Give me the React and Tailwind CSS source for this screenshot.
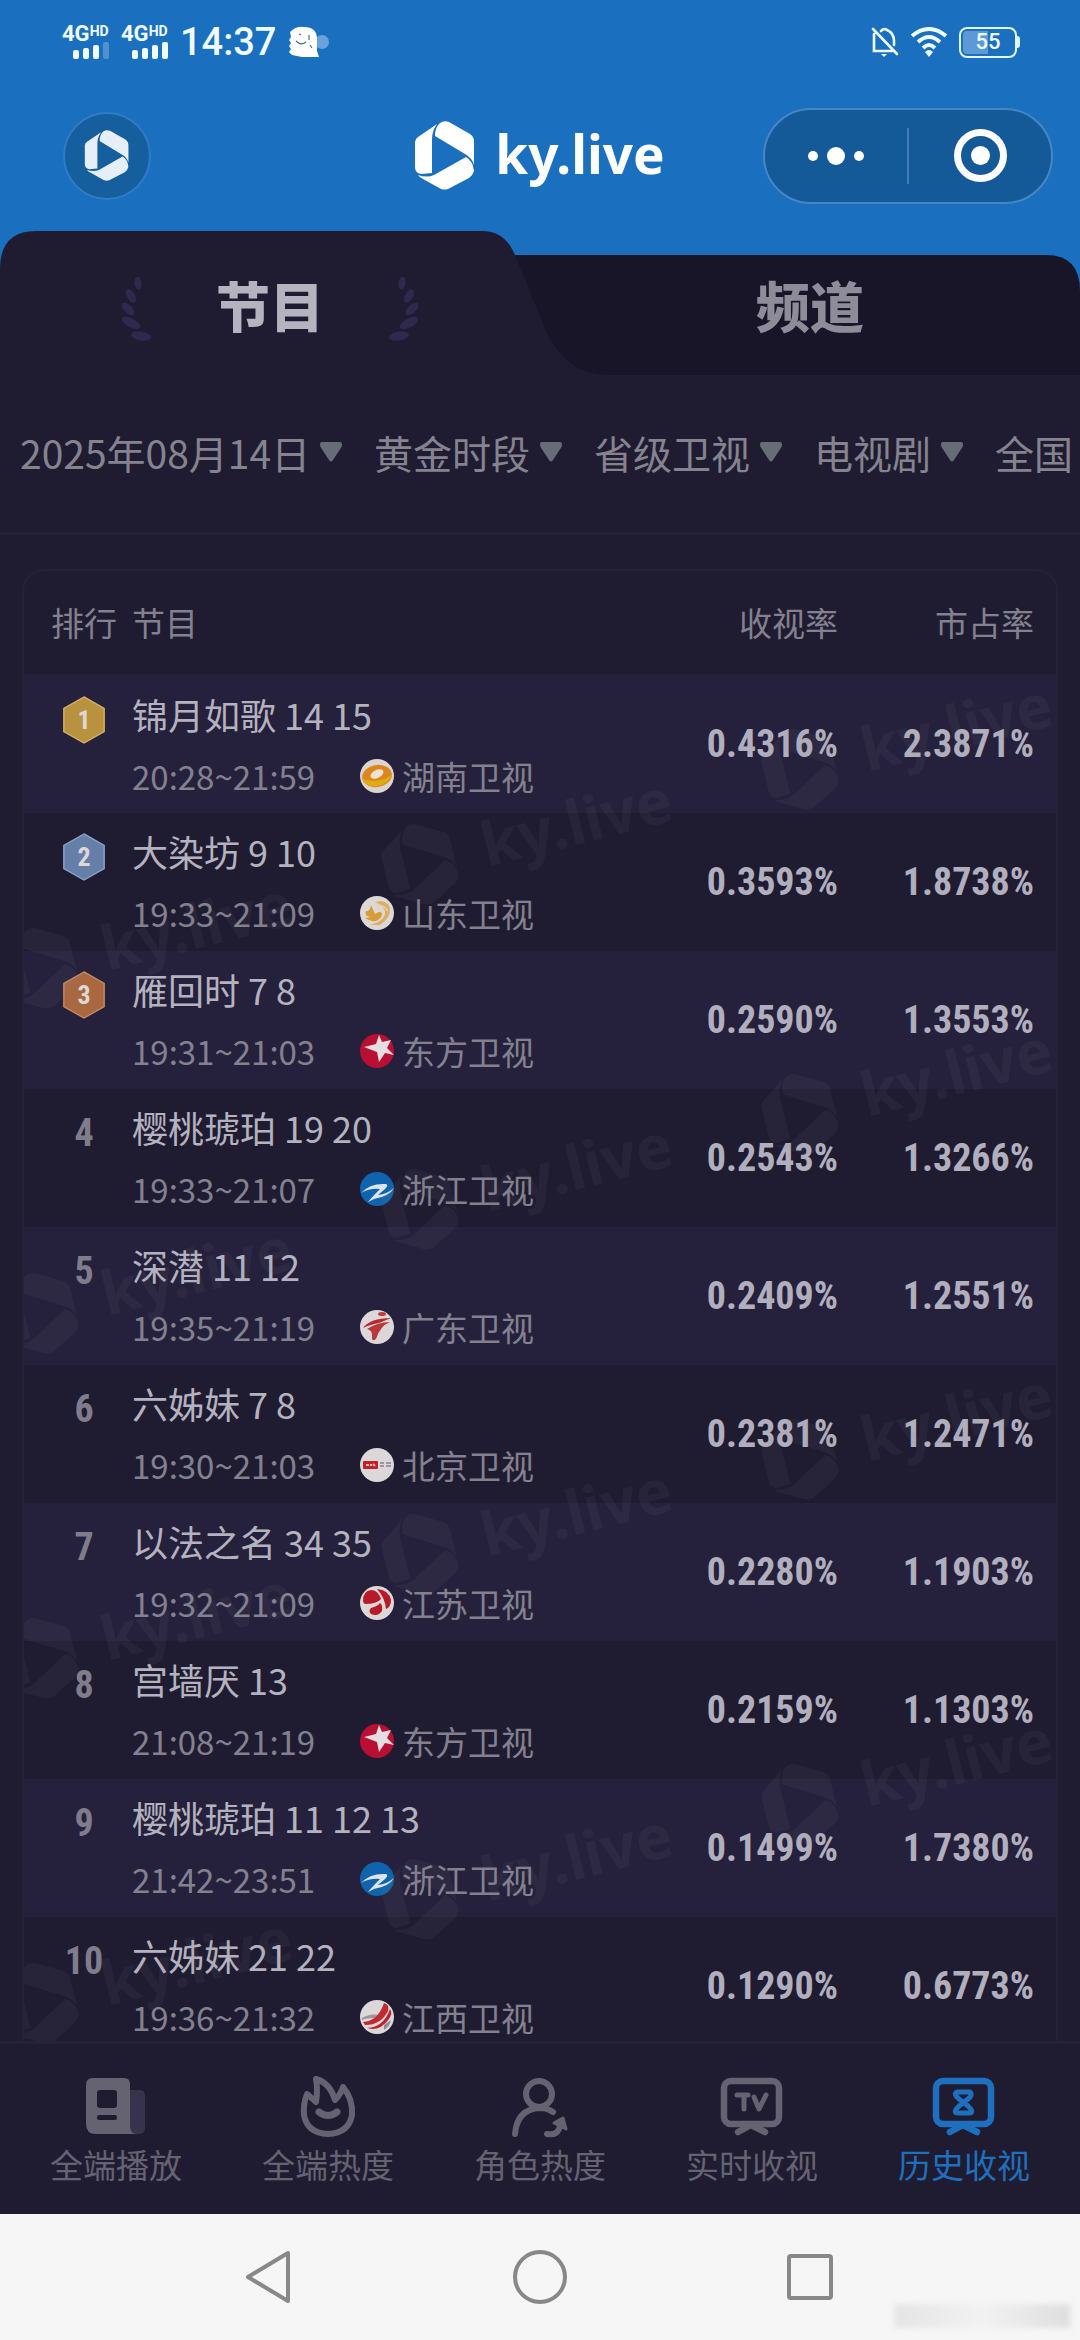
import React, { useState } from 'react';

const PROGRAMS = [
  { rank: 1, title: '锦月如歌 14 15', time: '20:28~21:59', channel: '湖南卫视', rating: '0.4316%', share: '2.3871%' },
  { rank: 2, title: '大染坊 9 10', time: '19:33~21:09', channel: '山东卫视', rating: '0.3593%', share: '1.8738%' },
  { rank: 3, title: '雁回时 7 8', time: '19:31~21:03', channel: '东方卫视', rating: '0.2590%', share: '1.3553%' },
  { rank: 4, title: '樱桃琥珀 19 20', time: '19:33~21:07', channel: '浙江卫视', rating: '0.2543%', share: '1.3266%' },
  { rank: 5, title: '深潜 11 12', time: '19:35~21:19', channel: '广东卫视', rating: '0.2409%', share: '1.2551%' },
  { rank: 6, title: '六姊妹 7 8', time: '19:30~21:03', channel: '北京卫视', rating: '0.2381%', share: '1.2471%' },
  { rank: 7, title: '以法之名 34 35', time: '19:32~21:09', channel: '江苏卫视', rating: '0.2280%', share: '1.1903%' },
  { rank: 8, title: '宫墙厌 13', time: '21:08~21:19', channel: '东方卫视', rating: '0.2159%', share: '1.1303%' },
  { rank: 9, title: '樱桃琥珀 11 12 13', time: '21:42~23:51', channel: '浙江卫视', rating: '0.1499%', share: '1.7380%' },
  { rank: 10, title: '六姊妹 21 22', time: '19:36~21:32', channel: '江西卫视', rating: '0.1290%', share: '0.6773%' },
];

const FILTERS = [
  { label: '日期', value: '2025年08月14日' },
  { label: '时段', value: '黄金时段' },
  { label: '频道类型', value: '省级卫视' },
  { label: '节目类型', value: '电视剧' },
  { label: '地区', value: '全国' },
];

const MEDALS = {
  1: { fill: '#b8923f', edge: '#d3b262' },
  2: { fill: '#667fa8', edge: '#8aa3c4' },
  3: { fill: '#a9683f', edge: '#c68a62' },
};

// x / y of each repeated logo inside the card
const WATERMARKS = [
  [776, 197], [396, 292], [16, 396],
  [776, 542], [396, 637], [16, 741],
  [776, 887], [396, 982], [16, 1086],
  [776, 1232], [396, 1327], [16, 1431],
];

const LogoShape = () => (
  <>
    <path d="M0 21Q0 18 3 16L22 3Q17 10 17 18V52L6 53Q0 52 0 46Z" />
    <path d="M25 2Q29-1 34 1L55 13Q59 16 59 20V44Q57 37 50 33L20 15Q20 6 25 2Z" />
    <path d="M3 54Q12 57 19 54L51 36Q58 40 59 50Q58 54 54 57L33 68Q30 69 26 68L8 58Q4 56 3 54Z" />
  </>
);

const Logo = ({ className }) => (
  <svg viewBox="0 0 60 69" className={className} fill="currentColor" aria-hidden="true">
    <LogoShape />
  </svg>
);

const Signal = ({ last }) => (
  <div className="w-[47px] flex flex-col">
    <div className="flex items-start h-4 leading-none font-bold">
      <span className="text-[22px] leading-4">4G</span>
      <span className="text-[14px] leading-[11px]">HD</span>
    </div>
    <svg viewBox="0 0 36 17" className="w-9 h-[17px] self-end" fill="currentColor" aria-hidden="true">
      <rect x="0" y="8" width="6" height="9" rx="2" />
      <rect x="10" y="6" width="6" height="11" rx="2" />
      <rect x="20" y="3" width="6" height="14" rx="2" />
      <rect x="30" y="0" width="6" height="17" rx="2" opacity={last ? 1 : 0.25} />
    </svg>
  </div>
);

const StatusBar = () => (
  <div className="h-[84px] flex items-center justify-between pl-[62px] pr-[60px] text-[#f0fbff] font-['Roboto',sans-serif]">
    <div className="flex items-center gap-3">
      <Signal />
      <Signal last />
      <span className="text-[38px] font-medium leading-none">14:37</span>
      <svg viewBox="0 0 42 32" className="w-[42px] h-8" aria-hidden="true">
        <circle cx="34" cy="16" r="7" fill="#6aa3dc" />
        <path d="M2 6Q8 0 16 1Q29 1 29 13V25L31 31H14L4 29L1 26L3 23L1 20L3 17L1 14L3 11Z" fill="#fff" />
        <path d="M8 15Q13 20 18 16M21 9V14M22 19L24 22M11 8L13 9" stroke="#4f6f90" strokeWidth="1.2" fill="none" />
      </svg>
    </div>
    <div className="flex items-center gap-3">
      <svg viewBox="0 0 28 32" className="w-7 h-8" fill="none" stroke="currentColor" strokeWidth="2.6" aria-hidden="true">
        <path d="M3 8V25H21M10 5Q13 2 16 4Q23 7 23 15V19M2 3L26 28" strokeLinecap="round" />
        <path d="M10 28H16L13 31Z" fill="currentColor" stroke="none" />
      </svg>
      <svg viewBox="0 0 36 30" className="w-9 h-[30px]" fill="none" stroke="currentColor" strokeWidth="4" aria-hidden="true">
        <path d="M1 9Q18-5 35 9M7 15Q18 5 29 15M12 21Q18 15 24 21" />
        <path d="M14 25Q18 21 22 25L18 30Z" fill="currentColor" stroke="none" />
      </svg>
      <div className="flex items-center">
        <div className="relative w-[58px] h-[31px] rounded-lg border-2 border-[#dff5ff] p-0.5">
          <div className="h-full w-1/2 rounded-l bg-[#5c9ad6]" />
          <span className="absolute inset-0 flex items-center justify-center text-[22px] font-medium leading-none">55</span>
        </div>
        <div className="w-[3px] h-3 rounded-r bg-[#dff5ff]" />
      </div>
    </div>
  </div>
);

const TitleBar = () => (
  <div className="h-[147px] pb-1 grid grid-cols-[1fr_auto_1fr] items-center px-[27px]">
    <button
      type="button"
      aria-label="首页"
      className="ml-9 w-[88px] h-[88px] rounded-full border-2 border-[#2f7cc4] bg-[#165f9f] text-[#e6eef8] flex items-center justify-center"
    >
      <Logo className="w-[46px] h-[51px]" />
    </button>
    <h1 className="flex items-center gap-5 text-white">
      <Logo className="w-[60px] h-[69px]" />
      <span className="pb-1 font-['Noto_Sans',sans-serif] font-bold text-[53px] leading-[69px]">ky.live</span>
    </h1>
    <div className="justify-self-end w-[290px] h-24 rounded-full border-2 border-[#4587c4] bg-[#155a98] flex items-center text-white">
      <button type="button" aria-label="更多" className="flex-1 h-full flex items-center justify-center gap-[9px]">
        <span className="w-2.5 h-2.5 rounded-full bg-white" />
        <span className="w-[18px] h-[18px] rounded-full bg-white" />
        <span className="w-2.5 h-2.5 rounded-full bg-white" />
      </button>
      <span className="w-0.5 h-14 bg-[#3f7fb9]" />
      <button type="button" aria-label="关闭" className="flex-1 h-full flex items-center justify-center">
        <span className="w-[53px] h-[53px] rounded-full border-[7px] border-white flex items-center justify-center">
          <span className="w-[19px] h-[19px] rounded-full bg-white" />
        </span>
      </button>
    </div>
  </div>
);

const Laurel = ({ className }) => (
  <svg viewBox="0 0 30 64" className={className} fill="#2e294d" aria-hidden="true">
    <ellipse cx="16" cy="6" rx="3.5" ry="6.5" transform="rotate(-8 16 6)" />
    <ellipse cx="9" cy="19" rx="4" ry="7.5" transform="rotate(-30 9 19)" />
    <ellipse cx="6" cy="32" rx="4" ry="8" transform="rotate(-48 6 32)" />
    <ellipse cx="9" cy="46" rx="4.5" ry="10" transform="rotate(-62 9 46)" />
    <ellipse cx="19" cy="59" rx="4.5" ry="10" transform="rotate(-80 19 59)" />
  </svg>
);

const Tabs = ({ active, onChange }) => (
  <div className="relative h-36 grid grid-cols-2 text-[54px] font-black leading-none" role="tablist">
    <svg viewBox="0 0 1080 144" preserveAspectRatio="none" className="absolute inset-0 w-full h-full" aria-hidden="true">
      <path d="M480 24H1046Q1080 24 1080 60V144H480Z" fill="#181529" />
      <path d="M0 38Q0 0 36 0H482C498 0 508 8 515 24L541 88C554 124 576 144 608 144H0Z" fill="#1f1c31" />
    </svg>
    <button
      type="button"
      role="tab"
      aria-selected={active === 'program'}
      onClick={() => onChange('program')}
      className="relative flex items-center justify-center gap-16 pt-3 text-[#b5b3c0]"
    >
      <Laurel className="w-[30px] h-16" />
      <span className="pb-2">节目</span>
      <Laurel className="w-[30px] h-16 -scale-x-100" />
    </button>
    <button
      type="button"
      role="tab"
      aria-selected={active === 'channel'}
      onClick={() => onChange('channel')}
      className="relative flex items-center justify-center pt-3 text-[#8e8c99]"
    >
      <span className="pb-2">频道</span>
    </button>
  </div>
);

const Filters = () => (
  <div className="flex items-center gap-8 h-40 shrink-0 pl-5 pb-1 overflow-hidden border-b-[3px] border-[#242138]">
    {FILTERS.map(f => (
      <label key={f.label} className="flex items-center gap-[9px] shrink-0">
        <select
          aria-label={f.label}
          className="appearance-none bg-transparent text-[39px] leading-[56px] text-[#85838f] outline-none"
        >
          <option>{f.value}</option>
        </select>
        <svg viewBox="0 0 22 20" className="w-[22px] h-5" fill="#686b78" aria-hidden="true">
          <path d="M2 0H20Q23 0 21.500 5L13 18Q11 21 9 18L.5 5Q-1 0 2 0Z" />
        </svg>
      </label>
    ))}
  </div>
);

const Medal = ({ rank }) => (
  <div className="relative flex items-center justify-center w-11 h-12">
    <svg viewBox="0 0 44 50" className="absolute inset-0 w-full h-full" aria-hidden="true">
      <path d="M22 1L43 13V37L22 49L1 37V13Z" fill={MEDALS[rank].fill} stroke={MEDALS[rank].edge} strokeWidth="1.5" />
    </svg>
    <span className="relative text-[26px] leading-none font-bold text-[#dcd8d8]">{rank}</span>
  </div>
);

const CHANNEL_ART = {
  湖南卫视: (
    <>
      <circle cx="17" cy="17" r="17" fill="#dcd4d0" />
      <ellipse cx="17" cy="17" rx="15" ry="11" fill="#dd861f" transform="rotate(-10 17 17)" />
      <path d="M2 19Q5 29 17 27Q29 25 32 15Q25 22 14 22Q6 22 2 19Z" fill="#dcae12" />
      <ellipse cx="17" cy="15" rx="7" ry="4" fill="#f1e3cf" transform="rotate(-28 17 15)" />
    </>
  ),
  山东卫视: (
    <>
      <circle cx="17" cy="17" r="17" fill="#dcd8d6" />
      <path d="M11 9L15 18L19 16Q24 16 21 21Q15 29 5 22Q8 22 10 21Q4 20 6 15Q10 16 11 9Z" fill="#d99c34" />
      <path d="M15 6Q27 3 30 12Q31 22 20 29L9 29Q26 25 25 15Q23 9 15 6Z" fill="#d9b066" />
      <path d="M17 9Q24 9 28 15" stroke="#e8cf9e" strokeWidth="1.5" fill="none" />
    </>
  ),
  东方卫视: (
    <>
      <circle cx="17" cy="17" r="17" fill="#b90f32" />
      <path d="M19 1L22 8L31 6L27 14L34 21L25 19L19 28L17 18L4 13L16 10Z" fill="#e4dde2" />
    </>
  ),
  浙江卫视: (
    <>
      <circle cx="17" cy="17" r="17" fill="#0f64ad" />
      <path d="M1 21Q10 11 26 12Q29 13 25 17L18 23Q27 22 34 16Q30 24 14 27L8 30Q12 25 20 17Q10 16 1 21Z" fill="#dde4ee" />
    </>
  ),
  广东卫视: (
    <>
      <circle cx="17" cy="17" r="17" fill="#dcd8da" />
      <path d="M3 18Q10 8 31 8Q24 11 19 13Q9 15 3 18Z" fill="#b92a30" />
      <path d="M7 19Q18 12 30 12Q20 16 16 29Q12 32 12 28Q13 20 7 19Z" fill="#b9383a" />
      <ellipse cx="22" cy="4" rx="4" ry="2" fill="#c23a3e" />
    </>
  ),
  北京卫视: (
    <>
      <circle cx="17" cy="17" r="17" fill="#dcd8da" />
      <rect x="3" y="13" width="15" height="8" rx="1" fill="#c11f28" />
      <path d="M6 17H9M10 17H12M13 16L15 18" stroke="#e8b8b8" strokeWidth="2" />
      <path d="M20 15H24M20 18H24M26 15H31M26 18H31" stroke="#9a96a0" strokeWidth="2" />
    </>
  ),
  江苏卫视: (
    <>
      <circle cx="17" cy="17" r="17" fill="#dcd8da" />
      <path d="M3 15Q3 5 11 4Q18 4 21 13Q17 18 5 18Q3 17 3 15Z" fill="#b81a2a" />
      <path d="M17 3Q29 4 31 14Q31 21 26 23Q25 12 17 3Z" fill="#b81a2a" />
      <path d="M11 22Q18 20 20 17Q23 19 22 25Q18 31 11 28Q8 25 11 22Z" fill="#b81a2a" />
    </>
  ),
  江西卫视: (
    <>
      <circle cx="17" cy="17" r="17" fill="#dcd8da" />
      <path d="M2 18Q10 13 19 15L14 18Q6 18 2 20Z" fill="#9a979f" />
      <path d="M3 22Q18 21 24 3Q30 5 28 11Q21 25 5 25Z" fill="#c02a30" />
      <path d="M7 28Q24 27 30 9Q33 13 29 19Q22 29 12 29Z" fill="#b8262c" />
      <path d="M24 25L31 20Q30 26 24 30Z" fill="#8f8c95" />
    </>
  ),
};

const RankRow = ({ item }) => (
  <tr className="h-[138px] odd:bg-[#25213c]">
    <td className="pl-3 align-top">
      <div className="flex h-[88px] items-center justify-center text-[38px] font-bold text-[#7f7d8c] font-['Roboto_Condensed','Roboto',sans-serif]">
        {item.rank <= 3 ? <Medal rank={item.rank} /> : item.rank}
      </div>
    </td>
    <td className="align-top pt-3 whitespace-nowrap">
      <p className="text-[36px] leading-[52px] text-[#b4b2bf]">{item.title}</p>
      <div className="mt-3 flex items-center text-[33px] leading-[48px] text-[#83818f]">
        <span className="w-[228px]">{item.time}</span>
        <svg viewBox="0 0 34 34" className="w-[34px] h-[34px] mr-2" aria-hidden="true">
          {CHANNEL_ART[item.channel]}
        </svg>
        <span>{item.channel}</span>
      </div>
    </td>
    <td className="text-right text-[38px] font-bold text-[#b1afbd] font-['Roboto_Condensed','Roboto',sans-serif]">{item.rating}</td>
    <td className="pr-[22px] text-right text-[38px] font-bold text-[#b1afbd] font-['Roboto_Condensed','Roboto',sans-serif]">{item.share}</td>
  </tr>
);

const Watermark = () => (
  <svg className="absolute inset-0 w-full h-full pointer-events-none" fill="#8a8798" opacity="0.08" aria-hidden="true">
    {WATERMARKS.map(([x, y]) => (
      <g key={`${x}-${y}`} transform={`translate(${x} ${y}) rotate(-14)`}>
        <g transform="translate(-36 -40) scale(1.2)">
          <LogoShape />
        </g>
        <text x="64" y="20" className="font-['Noto_Sans',sans-serif] text-[61px] font-bold">ky.live</text>
      </g>
    ))}
  </svg>
);

const RankTable = () => (
  <div className="relative mx-[22px] mt-[34px] overflow-hidden rounded-t-[22px] border-2 border-b-0 border-[#242138]">
    <table className="w-full table-fixed border-collapse">
      <colgroup>
        <col className="w-[108px]" />
        <col />
        <col className="w-[196px]" />
        <col className="w-[218px]" />
      </colgroup>
      <thead>
        <tr className="h-[104px] border-b-2 border-[#242138] text-[33px] text-[#83818f]">
          <th className="pl-3 font-normal">排行</th>
          <th className="text-left font-normal">节目</th>
          <th className="text-right font-normal">收视率</th>
          <th className="pr-[22px] text-right font-normal">市占率</th>
        </tr>
      </thead>
      <tbody>
        {PROGRAMS.map(item => <RankRow key={item.rank} item={item} />)}
      </tbody>
    </table>
    <Watermark />
  </div>
);

const PlayIcon = () => (
  <svg viewBox="0 0 64 64" className="w-16 h-16" aria-hidden="true">
    <path d="M46 16H56Q61 16 61 22V54Q61 60 54 60H46Z" fill="#37334c" />
    <path fillRule="evenodd" d="M9 4H40Q46 4 46 10V52Q46 60 53 60H12Q2 60 2 50V11Q2 4 9 4ZM16 16Q13 16 13 19V31Q13 34 16 34H30Q33 34 33 31V19Q33 16 30 16ZM15 41Q13 41 13 44Q13 46 15 46H31Q33 46 33 44Q33 41 31 41Z" fill="currentColor" />
  </svg>
);

const FlameIcon = () => (
  <svg viewBox="0 0 64 64" className="w-16 h-16" fill="none" stroke="currentColor" strokeWidth="6" strokeLinecap="round" strokeLinejoin="round" aria-hidden="true">
    <path d="M20 5Q34 9 39 26Q45 20 47 13Q57 25 56 41Q53 59 32 60Q11 59 8 41Q7 30 11 20L20 28Q22 16 20 5Z" />
    <path d="M23 38Q32 45 41 38" strokeWidth="7" />
  </svg>
);

const RoleIcon = () => (
  <svg viewBox="0 0 64 64" className="w-16 h-16" fill="none" stroke="currentColor" strokeWidth="6" strokeLinecap="round" strokeLinejoin="round" aria-hidden="true">
    <circle cx="31" cy="20" r="13" />
    <path d="M7 60Q9 35 32 34Q39 34 45 38" />
    <path d="M39 60Q50 62 52 52" />
    <path d="M46 49L55 44L58 55Z" fill="currentColor" strokeWidth="3" />
  </svg>
);

const TvFrame = ({ children }) => (
  <svg viewBox="0 0 64 64" className="w-16 h-16" fill="none" stroke="currentColor" strokeWidth="6.500" strokeLinecap="round" strokeLinejoin="round" aria-hidden="true">
    <rect x="4" y="7" width="55" height="43" rx="7" />
    <path d="M18 58L31 51L45 58" />
    {children}
  </svg>
);

const LiveIcon = () => (
  <TvFrame>
    <path d="M17 21H28M24 21V35M34 23L39 35L46 21" strokeWidth="5" />
  </TvFrame>
);

const HistoryIcon = () => (
  <TvFrame>
    <path d="M25 18H38Q41 21 36 25L27 32Q20 39 26 39H37Q43 39 36 32L27 25Q21 20 25 18Z" strokeWidth="5" />
  </TvFrame>
);

const NAV_ITEMS = [
  { label: '全端播放', href: '#play', Icon: PlayIcon },
  { label: '全端热度', href: '#heat', Icon: FlameIcon },
  { label: '角色热度', href: '#role', Icon: RoleIcon },
  { label: '实时收视', href: '#live', Icon: LiveIcon },
  { label: '历史收视', href: '#history', Icon: HistoryIcon, current: true },
];

const BottomNav = () => (
  <nav className="shrink-0 grid grid-cols-5 px-2.5 pt-[30px] pb-[26px] border-t-[3px] border-[#242138] bg-[#1f1c31]">
    {NAV_ITEMS.map(({ label, href, Icon, current }) => (
      <a
        key={label}
        href={href}
        aria-current={current ? 'page' : undefined}
        className={`flex flex-col items-center gap-0.5 ${current ? 'text-[#1f6fbf]' : 'text-[#656272]'}`}
      >
        <Icon />
        <span className="text-[33px] leading-[48px]">{label}</span>
      </a>
    ))}
  </nav>
);

const SystemNav = () => (
  <div className="relative shrink-0 h-[126px] px-[12.5%] grid grid-cols-3 place-items-center bg-[#f6f6f6]">
    <button type="button" aria-label="返回">
      <svg viewBox="0 0 54 56" className="w-[54px] h-14" fill="none" stroke="#888" strokeWidth="4" strokeLinejoin="round" aria-hidden="true">
        <path d="M45 4V52L5 28Z" />
      </svg>
    </button>
    <button type="button" aria-label="主页" className="w-[54px] h-[54px] rounded-full border-4 border-[#888]" />
    <button type="button" aria-label="最近任务" className="w-[46px] h-[46px] rounded border-4 border-[#888]" />
    <div className="absolute right-2.5 bottom-3 w-44 h-6 bg-linear-to-r from-[#e4e4e4] via-[#f2f2f2] to-[#dedede] blur-[3px]" />
  </div>
);

const App = () => {
  const [tab, setTab] = useState('program');

  return (
    <div className="h-screen flex flex-col bg-[#1f1c31] font-['Noto_Sans_CJK_SC',sans-serif]">
      <header className="shrink-0 bg-[#1a6fbf]">
        <StatusBar />
        <TitleBar />
        <Tabs active={tab} onChange={setTab} />
      </header>
      <Filters />
      <main className="flex-1 min-h-0 overflow-y-auto [scrollbar-width:none]">
        <RankTable />
      </main>
      <BottomNav />
      <SystemNav />
    </div>
  );
};

export default App;
